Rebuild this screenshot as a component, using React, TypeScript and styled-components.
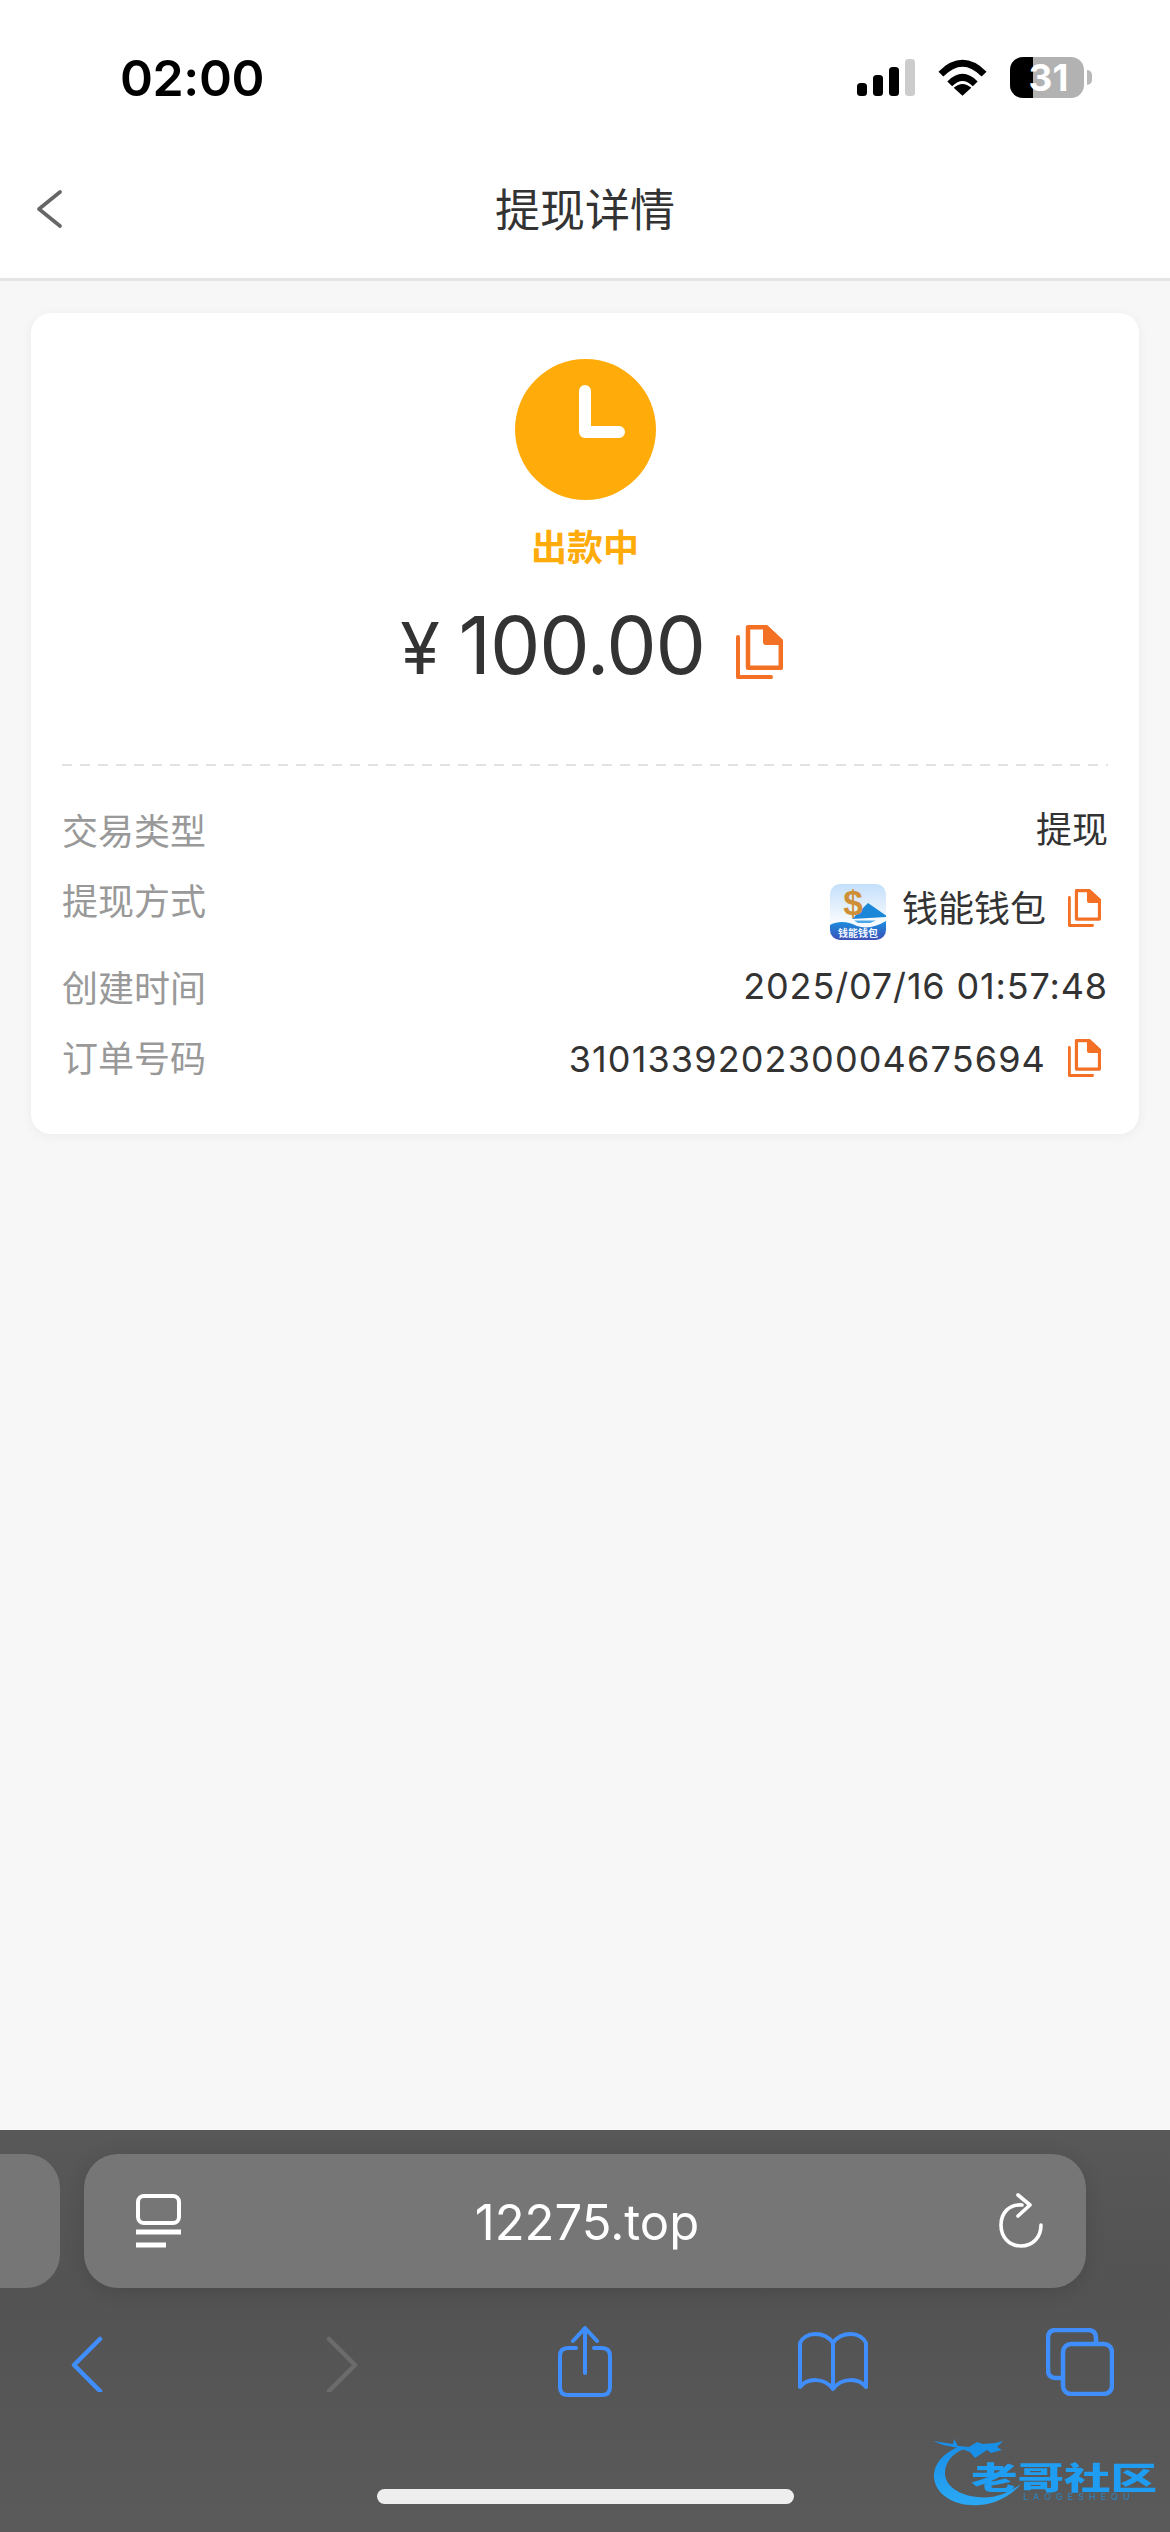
import React from "react";
import styled, { createGlobalStyle } from "styled-components";

const Global = createGlobalStyle`
  html, body { margin: 0; padding: 0; background: #f7f7f7; }
  * { box-sizing: border-box; }
  body { font-family: Inter, "Noto Sans CJK SC", sans-serif; }
`;

const Page = styled.div`
  position: relative;
  width: 1170px;
  height: 2532px;
  display: flex;
  flex-direction: column;
  overflow: hidden;
  background: #f7f7f7;
`;

const StatusBar = styled.div`
  height: 135px;
  background: #fff;
  display: flex;
  justify-content: space-between;
  align-items: flex-start;
  padding: 50px 78px 0 120px;
`;

const Clock = styled.div`
  font-size: 50px;
  line-height: 56px;
  font-weight: 600;
  color: #000;
  letter-spacing: -0.4px;
`;

const StatusIcons = styled.div`
  display: flex;
  align-items: center;
  gap: 22px;
  padding-top: 7px;
`;

const Battery = styled.div`
  position: relative;
  width: 74px;
  height: 41px;
  border-radius: 13px;
  background: #b2b2b2;
  display: flex;
  align-items: center;
  justify-content: center;
  color: #fff;
  font-size: 37px;
  font-weight: 700;
  line-height: 41px;
  padding-left: 3px;
`;

const BatteryFill = styled.span`
  position: absolute;
  left: 0;
  top: 0;
  bottom: 0;
  width: 23px;
  background: #000;
  border-radius: 13px 0 0 13px;
`;

const BatteryText = styled.span`
  position: relative;
`;

const BatteryWrap = styled.div`
  display: flex;
  align-items: center;
  gap: 3px;
`;

const BatteryCap = styled.span`
  width: 5px;
  height: 15px;
  border-radius: 0 5px 5px 0;
  background: #b9b9b9;
`;

const NavBar = styled.header`
  height: 146px;
  background: #fff;
  border-bottom: 3px solid #e4e4e4;
  display: flex;
  align-items: center;
  justify-content: center;
  position: relative;
  padding-top: 2px;
`;

const BackButton = styled.span`
  position: absolute;
  left: 36px;
  top: 55px;
  line-height: 0;
`;

const Title = styled.h1`
  margin: 0;
  font-size: 45px;
  line-height: 60px;
  font-weight: 400;
  color: #333;
  font-family: "Noto Sans CJK SC", sans-serif;
`;

const Content = styled.main`
  flex: 1;
  padding: 32px 31px 0;
`;

const Card = styled.section`
  height: 821px;
  background: #fff;
  border-radius: 20px;
  box-shadow: 0 2px 12px rgba(0, 0, 0, 0.05);
  padding: 46px 31px 0;
  display: flex;
  flex-direction: column;
`;

const Summary = styled.div`
  display: flex;
  flex-direction: column;
  align-items: center;
`;

const StatusCircle = styled.div`
  width: 141px;
  height: 141px;
  border-radius: 50%;
  background: #ffab0a;
  line-height: 0;
`;

const StatusText = styled.div`
  margin-top: 23px;
  font-size: 36px;
  line-height: 44px;
  font-weight: 700;
  color: #ffab0a;
  font-family: "Noto Sans CJK SC", sans-serif;
`;

const AmountRow = styled.div`
  margin-top: 31px;
  display: flex;
  align-items: center;
  height: 96px;
  padding-left: 13px;
`;

const Amount = styled.div`
  font-size: 80px;
  line-height: 96px;
  font-weight: 400;
  color: #333;
  letter-spacing: -1.2px;
`;

const Yen = styled.span`
  font-size: 72px;
  margin-right: 20px;
`;

const AmountCopy = styled.span`
  margin: 12px 0 0 31px;
  line-height: 0;
`;

const Divider = styled.div`
  margin-top: 70px;
  height: 2px;
  background-image: repeating-linear-gradient(to right, #e2e2e2 0 10px, transparent 10px 18px);
`;

const Rows = styled.div`
  margin-top: 38px;
  display: flex;
  flex-direction: column;
`;

const Row = styled.div<{ $height: number }>`
  height: ${(p) => p.$height}px;
  display: flex;
  justify-content: space-between;
  align-items: flex-start;
`;

const Label = styled.span`
  font-size: 36px;
  line-height: 50px;
  color: #999;
  font-family: "Noto Sans CJK SC", sans-serif;
`;

const Value = styled.span<{ $shift?: number; $spacing?: number }>`
  font-size: 36px;
  line-height: 50px;
  color: #333;
  display: inline-flex;
  align-items: center;
  margin-top: ${(p) => p.$shift ?? 0}px;
  letter-spacing: ${(p) => p.$spacing ?? 0}px;
`;

const AppIcon = styled.span`
  margin: 6px 16px 0 0;
  line-height: 0;
`;

const ValueCopy = styled.span`
  margin: -2px 7px 0 22px;
  line-height: 0;
`;

const BrowserBar = styled.footer`
  height: 402px;
  background: linear-gradient(#585858, #535353 40%, #5a5a5a);
  display: flex;
  flex-direction: column;
`;

const AddressArea = styled.div`
  height: 134px;
  margin-top: 24px;
  display: flex;
  gap: 24px;
`;

const SideTab = styled.div`
  width: 60px;
  border-radius: 0 34px 34px 0;
  background: #767676;
`;

const AddressPill = styled.div`
  width: 1002px;
  border-radius: 34px;
  background: #767676;
  box-shadow: 0 4px 20px rgba(0, 0, 0, 0.12);
  display: flex;
  align-items: center;
  justify-content: space-between;
  padding: 0 42px 0 52px;
`;

const Url = styled.span`
  font-size: 49px;
  line-height: 60px;
  color: #fff;
  font-weight: 400;
  margin: 4px 0 0 -6px;
`;

const ToolRow = styled.nav`
  margin-top: 36px;
  height: 76px;
  display: flex;
  align-items: center;
  padding-left: 71px;
`;

const ToolSlot = styled.span<{ $width: number }>`
  width: ${(p) => p.$width}px;
  line-height: 0;
  flex: none;
`;

const HomeBar = styled.div`
  width: 417px;
  height: 15px;
  border-radius: 8px;
  background: #eee;
  margin: 89px auto 0;
`;

const Watermark = styled.div`
  position: absolute;
  left: 933px;
  top: 2438px;
  width: 222px;
  height: 72px;
  filter: blur(0.6px);
`;

const WatermarkArc = styled.span`
  position: absolute;
  inset: 0;
  line-height: 0;
`;

const WatermarkTitle = styled.span`
  position: absolute;
  left: 38px;
  top: 22px;
  font-size: 31px;
  line-height: 31px;
  font-weight: 900;
  color: #1f9df2;
  white-space: nowrap;
  transform: scaleX(1.5);
  transform-origin: left center;
  font-family: "Noto Sans CJK SC", sans-serif;
`;

const WatermarkSub = styled.span`
  position: absolute;
  left: 90px;
  top: 54px;
  font-size: 9px;
  line-height: 10px;
  letter-spacing: 5px;
  color: #2a86c8;
  white-space: nowrap;
`;

const CopyIcon = ({ size }: { size: number }) => (
  <svg width={size} height={size * 1.15} viewBox="0 0 47 54" fill="none">
    <path d="M12 2.2H30L44.8 16V42.8H12Z" stroke="#f37024" strokeWidth="4.5" strokeLinejoin="round" fill="#fff" />
    <path d="M27 0H31L47 15V20H30Q27 20 27 17Z" fill="#f37024" />
    <path d="M2 12V52H35" stroke="#f37024" strokeWidth="4" strokeLinecap="round" strokeLinejoin="round" />
  </svg>
);

const SignalIcon = () => (
  <svg width="58" height="38" viewBox="0 0 58 38">
    <rect x="0" y="24" width="10" height="13" rx="3.5" fill="#000" />
    <rect x="16" y="16" width="10" height="21" rx="3.5" fill="#000" />
    <rect x="32" y="8" width="10" height="29" rx="3.5" fill="#000" />
    <rect x="48" y="0" width="10" height="37" rx="3.5" fill="#ccc" />
  </svg>
);

const WifiIcon = () => (
  <svg width="51" height="38" viewBox="0 0 52 38" fill="none" stroke="#000" strokeWidth="7">
    <path d="M4 15Q26 -7 48 15" />
    <path d="M13 25Q26 12 39 25" />
    <path d="M26 37L17 29Q26 21 35 29Z" fill="#000" stroke="none" />
  </svg>
);

const Logo = () => (
  <svg width="56" height="56" viewBox="0 0 56 56">
    <defs>
      <linearGradient id="logoSky" x1="0" y1="0" x2="0" y2="1">
        <stop offset="0" stopColor="#c4dffa" />
        <stop offset="0.65" stopColor="#f6fafe" />
      </linearGradient>
      <linearGradient id="logoSea" x1="0" y1="0" x2="0" y2="1">
        <stop offset="0" stopColor="#1a8fdf" />
        <stop offset="1" stopColor="#3d50b8" />
      </linearGradient>
      <clipPath id="logoClip">
        <rect width="56" height="56" rx="10" />
      </clipPath>
    </defs>
    <g clipPath="url(#logoClip)">
      <rect width="56" height="56" fill="url(#logoSky)" />
      <path d="M38 19L58 33L22 35Z" fill="#1b87d8" />
      <path d="M24 36.5H46L40 39H28Z" fill="#4aa5e6" />
      <text x="23" y="31" fontSize="35" fontWeight="900" fill="#cf8f36" textAnchor="middle" fontFamily="Liberation Sans, sans-serif">$</text>
      <path d="M0 41C10 36 18 38 27 42C36 45 46 43 56 37V56H0Z" fill="url(#logoSea)" />
      <text x="28" y="52.5" fontSize="10" fontWeight="700" fill="#f2f6ff" textAnchor="middle" fontFamily="Noto Sans CJK SC, sans-serif">钱能钱包</text>
    </g>
  </svg>
);

const ClockHands = () => (
  <svg width="141" height="141" viewBox="0 0 141 141">
    <path d="M70 32V73H104" fill="none" stroke="#fff" strokeWidth="12" strokeLinecap="round" strokeLinejoin="round" />
  </svg>
);

const TabsGlyph = () => (
  <svg width="46" height="54" viewBox="0 0 46 54" fill="none" stroke="#fff" strokeWidth="4">
    <rect x="2" y="2" width="41" height="27" rx="6" />
    <path d="M0 38H45" strokeWidth="5" />
    <path d="M0 51H30" strokeWidth="5" />
  </svg>
);

const ReloadGlyph = () => (
  <svg width="46" height="56" viewBox="0 0 46 56" fill="none" stroke="#fff" strokeWidth="3.6" strokeLinecap="round" strokeLinejoin="round">
    <path d="M24 12C11 11 3 20 3 32C3 44 11 53 23 53C35 53 43 44 43 32" />
    <path d="M20 2L32 12L20 23" />
  </svg>
);

const BLUE = "#3f8efc";

const BackGlyph = () => (
  <svg width="32" height="60" viewBox="0 0 32 60" fill="none" stroke={BLUE} strokeWidth="4.5" strokeLinecap="round" strokeLinejoin="round">
    <path d="M29 7L3 33L29 59" />
  </svg>
);

const ForwardGlyph = () => (
  <svg width="32" height="60" viewBox="0 0 32 60" fill="none" stroke="#6b6b6b" strokeWidth="4.5" strokeLinecap="round" strokeLinejoin="round">
    <path d="M3 7L29 33L3 59" />
  </svg>
);

const ShareGlyph = () => (
  <svg width="56" height="72" viewBox="0 0 56 72" fill="none" stroke={BLUE} strokeWidth="4" strokeLinecap="round" strokeLinejoin="round">
    <path d="M19 22H11Q3 22 3 30V61Q3 69 11 69H45Q53 69 53 61V30Q53 22 45 22H37" />
    <path d="M28 47V3" />
    <path d="M16 15L28 2L40 15" />
  </svg>
);

const BookGlyph = () => (
  <svg width="72" height="60" viewBox="0 0 72 60" fill="none" stroke={BLUE} strokeWidth="4" strokeLinecap="round" strokeLinejoin="round">
    <path d="M36 11C32 5 25 2 18 2C11 2 5 6 3 11V55C10 46 27 45 36 57C45 45 62 46 69 55V11C67 6 61 2 54 2C47 2 40 5 36 11V56" />
  </svg>
);

const CopyTabsGlyph = () => (
  <svg width="68" height="68" viewBox="0 0 68 68" fill="none" stroke={BLUE} strokeWidth="4.5" strokeLinejoin="round">
    <path d="M50 16V10Q50 2 42 2H10Q2 2 2 10V42Q2 50 10 50H16" />
    <rect x="17" y="16" width="49" height="50" rx="8" />
  </svg>
);

const WatermarkSwoosh = () => (
  <svg width="222" height="72" viewBox="0 0 222 72" fill="none">
    <defs>
      <linearGradient id="wm" x1="0" y1="0" x2="0" y2="1">
        <stop offset="0" stopColor="#1a8fe8" />
        <stop offset="1" stopColor="#2aa9f5" />
      </linearGradient>
    </defs>
    <path d="M27 8C8 16 0 28 1 40C3 58 24 69 46 67C62 66 78 58 88 46C74 56 60 61 44 59C26 57 12 48 12 35C12 24 20 15 31 11Z" fill="url(#wm)" />
    <path d="M0 3L20 6L21 1L25 8L36 9L44 4L50 6L62 5L70 3L64 9L69 12L58 15L54 12L42 20L37 14L26 10L10 7Z" fill="#1a8fe8" />
  </svg>
);

export default function App() {
  return (
    <Page>
      <Global />
      <StatusBar>
        <Clock>02:00</Clock>
        <StatusIcons>
          <SignalIcon />
          <WifiIcon />
          <BatteryWrap>
            <Battery>
              <BatteryFill />
              <BatteryText>31</BatteryText>
            </Battery>
            <BatteryCap />
          </BatteryWrap>
        </StatusIcons>
      </StatusBar>
      <NavBar>
        <BackButton>
          <svg width="27" height="38" viewBox="0 0 27 38" fill="none" stroke="#666" strokeWidth="3.6" strokeLinecap="round" strokeLinejoin="round">
            <path d="M24 2L3 19L24 36" />
          </svg>
        </BackButton>
        <Title>提现详情</Title>
      </NavBar>
      <Content>
        <Card>
          <Summary>
            <StatusCircle>
              <ClockHands />
            </StatusCircle>
            <StatusText>出款中</StatusText>
            <AmountRow>
              <Amount>
                <Yen>¥</Yen>100.00
              </Amount>
              <AmountCopy>
                <CopyIcon size={47} />
              </AmountCopy>
            </AmountRow>
          </Summary>
          <Divider />
          <Rows>
            <Row $height={70}>
              <Label>交易类型</Label>
              <Value $shift={1}>提现</Value>
            </Row>
            <Row $height={87}>
              <Label>提现方式</Label>
              <Value $shift={4}>
                <AppIcon>
                  <Logo />
                </AppIcon>
                钱能钱包
                <ValueCopy>
                  <CopyIcon size={33} />
                </ValueCopy>
              </Value>
            </Row>
            <Row $height={70}>
              <Label>创建时间</Label>
              <Value $spacing={0.85}>2025/07/16 01:57:48</Value>
            </Row>
            <Row $height={70}>
              <Label>订单号码</Label>
              <Value $spacing={1.14} $shift={3}>
                310133920230004675694
                <ValueCopy>
                  <CopyIcon size={33} />
                </ValueCopy>
              </Value>
            </Row>
          </Rows>
        </Card>
      </Content>
      <BrowserBar>
        <AddressArea>
          <SideTab />
          <AddressPill>
            <TabsGlyph />
            <Url>12275.top</Url>
            <ReloadGlyph />
          </AddressPill>
        </AddressArea>
        <ToolRow>
          <ToolSlot $width={255}><BackGlyph /></ToolSlot>
          <ToolSlot $width={231}><ForwardGlyph /></ToolSlot>
          <ToolSlot $width={240}><ShareGlyph /></ToolSlot>
          <ToolSlot $width={249}><BookGlyph /></ToolSlot>
          <ToolSlot $width={68}><CopyTabsGlyph /></ToolSlot>
        </ToolRow>
        <HomeBar />
      </BrowserBar>
      <Watermark>
        <WatermarkArc>
          <WatermarkSwoosh />
        </WatermarkArc>
        <WatermarkTitle>老哥社区</WatermarkTitle>
        <WatermarkSub>LAOGESHEQU</WatermarkSub>
      </Watermark>
    </Page>
  );
}
